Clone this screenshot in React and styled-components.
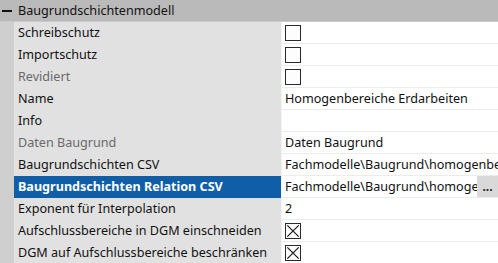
import styled, { createGlobalStyle } from "styled-components";

const Global = createGlobalStyle`
  html, body { margin: 0; padding: 0; background: #ffffff; }
  body { font-family: "Noto Sans", "Open Sans", sans-serif; }
`;

const rows = [
  { label: "Schreibschutz", type: "check", checked: false },
  { label: "Importschutz", type: "check", checked: false },
  { label: "Revidiert", type: "check", checked: false, dim: true },
  { label: "Name", value: "Homogenbereiche Erdarbeiten" },
  { label: "Info", value: "" },
  { label: "Daten Baugrund", value: "Daten Baugrund", dim: true },
  { label: "Baugrundschichten CSV", value: "Fachmodelle\\Baugrund\\homogenbereiche.csv" },
  { label: "Baugrundschichten Relation CSV", value: "Fachmodelle\\Baugrund\\homogenbereiche_relation.csv", selected: true },
  { label: "Exponent für Interpolation", value: "2" },
  { label: "Aufschlussbereiche in DGM einschneiden", type: "check", checked: true },
  { label: "DGM auf Aufschlussbereiche beschränken", type: "check", checked: true },
];

const App = () => {
  return (
    <>
      <Global />
      <Grid>
        <Header>
          <Toggle>
            <Minus />
          </Toggle>
          <HeaderTitle>Baugrundschichtenmodell</HeaderTitle>
        </Header>
        {rows.map((r) => (
          <Row key={r.label}>
            <Gutter />
            <Label $dim={r.dim} $selected={r.selected}>
              {r.label}
            </Label>
            <Value>
              {r.type === "check" ? (
                <Check>
                  {r.checked && (
                    <svg width="16" height="16" viewBox="0 0 16 16">
                      <path d="M1.5 1.5 L14.5 14.5 M14.5 1.5 L1.5 14.5" stroke="#1a1a1a" strokeWidth="1.4" />
                    </svg>
                  )}
                </Check>
              ) : (
                <ValueText>{r.value}</ValueText>
              )}
              {r.selected && <Ellipsis>...</Ellipsis>}
            </Value>
          </Row>
        ))}
      </Grid>
    </>
  );
};

export default App;

const Grid = styled.div`
  width: 498px;
  height: 263px;
  overflow: hidden;
  background: #dcdcdc;
  display: flex;
  flex-direction: column;
`;

const Header = styled.div`
  height: 21px;
  flex: none;
  display: flex;
  align-items: center;
  background: #bababa;
  border-bottom: 1px solid #c9c9c9;
`;

const Toggle = styled.div`
  width: 14px;
  height: 21px;
  display: flex;
  align-items: center;
  justify-content: center;
`;

const Minus = styled.div`
  width: 10px;
  height: 2px;
  background: #111;
`;

const HeaderTitle = styled.div`
  padding-left: 4px;
  font-size: 12.6px;
  color: #111;
  white-space: nowrap;
`;

const Row = styled.div`
  height: 22px;
  flex: none;
  display: grid;
  grid-template-columns: 14px 268px 1fr;
`;

const Gutter = styled.div`
  background: #cfcfcf;
`;

const Label = styled.div`
  display: flex;
  align-items: center;
  padding: 0 0 1px 4px;
  font-size: 12.6px;
  white-space: nowrap;
  overflow: hidden;
  background: ${(p) => (p.$selected ? "#0f5ea6" : "#e1e1e1")};
  color: ${(p) => (p.$selected ? "#ffffff" : p.$dim ? "#6a6a6a" : "#111111")};
  font-weight: ${(p) => (p.$selected ? 700 : 400)};
  border-right: 1px solid #f4f4f4;
`;

const Value = styled.div`
  display: flex;
  align-items: center;
  padding-left: 3px;
  background: #ffffff;
  border-bottom: 1px solid #ececec;
  overflow: hidden;
  min-width: 0;
`;

const ValueText = styled.span`
  flex: 1;
  min-width: 0;
  padding-bottom: 1px;
  font-size: 12.6px;
  color: #111;
  white-space: nowrap;
  overflow: hidden;
`;

const Check = styled.div`
  width: 16px;
  height: 16px;
  box-sizing: border-box;
  border: 1px solid #2a2a2a;
  background: #fdfdfd;
  display: flex;
  align-items: center;
  justify-content: center;
  svg { display: block; }
`;

const Ellipsis = styled.div`
  flex: none;
  width: 21px;
  height: 21px;
  background: #d9d9d9;
  display: flex;
  align-items: center;
  justify-content: center;
  font-size: 12px;
  font-weight: 700;
  color: #222;
`;
